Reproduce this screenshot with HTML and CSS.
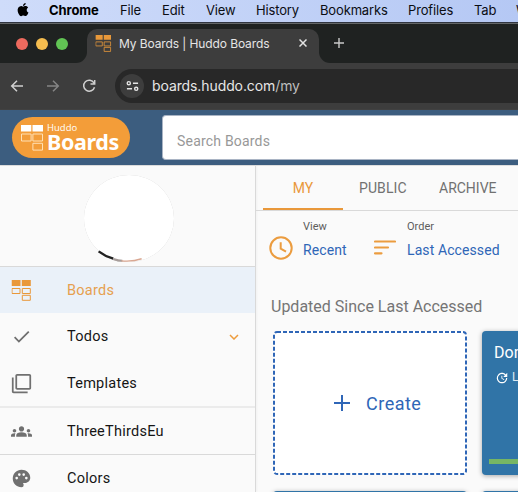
FILE: index.html
```html
<!DOCTYPE html>
<html lang="en">
<head>
<meta charset="utf-8">
<title>My Boards | Huddo Boards</title>
<link rel="stylesheet" href="styles.css">
</head>
<body>
<svg class="defs" width="0" height="0" aria-hidden="true">
  <symbol id="logo" viewBox="0 0 20 21"><path fill="currentColor" d="M0 0h9v6H0zM10.300 0h9v6h-9z"/><path fill="none" stroke="currentColor" d="M.5 8.500h8v5h-8zM10.800 8.500h8v5h-8zM10.800 15.300h8v5h-8z"/></symbol>
</svg>
<nav class="menubar">
  <svg class="apple" viewBox="0 0 24 24"><path d="M18.700 12.700c0-2.700 2.200-4 2.300-4.100-1.300-1.800-3.200-2.100-3.900-2.100-1.700-.2-3.200 1-4.100 1s-2.100-1-3.500-.9c-1.800 0-3.500 1-4.400 2.600-1.900 3.300-.5 8.100 1.300 10.700.9 1.300 2 2.800 3.400 2.700s1.900-.9 3.500-.9 2.100.9 3.500.8c1.500 0 2.400-1.300 3.300-2.600 1-1.500 1.500-2.900 1.500-3-.1 0-2.900-1.100-2.900-4.200zM16 4.900c.7-.9 1.200-2.200 1.100-3.500-1.100.1-2.400.7-3.200 1.600-.7.800-1.300 2.100-1.100 3.300 1.200.1 2.500-.6 3.200-1.400z"/></svg>
  <b>Chrome</b><span>File</span><span>Edit</span><span>View</span><span>History</span><span>Bookmarks</span><span>Profiles</span><span>Tab</span><span>Window</span>
</nav>
<div class="tabstrip">
  <div class="lights"><i class="red"></i><i class="yellow"></i><i class="green"></i></div>
  <div class="tab">
    <svg class="favicon" viewBox="0 0 20 21"><use href="#logo"/></svg>
    <span>My Boards | Huddo Boards</span>
    <svg class="close" viewBox="0 0 8 8"><path d="M.5.5l7 7m0-7l-7 7"/></svg>
  </div>
  <div class="newtab"><svg viewBox="0 0 10 10"><path d="M5 0v10M0 5h10"/></svg></div>
</div>
<div class="toolbar">
  <svg class="nav back" viewBox="0 0 14 14"><path d="M13 7H2M7 1.700L1.700 7 7 12.300"/></svg>
  <svg class="nav forward" viewBox="0 0 14 14"><path d="M1 7h11M7 1.700L12.300 7 7 12.300"/></svg>
  <svg class="nav reload" viewBox="0 0 14 14"><path d="M12 4A5.500 5.500 0 1 0 12.500 8.200M12.700 1v4H8.500"/></svg>
  <div class="address">
    <div class="site"><svg viewBox="0 0 14 12"><path d="M7.500 3H13M1 9h5.500"/><circle cx="3" cy="3" r="1.700"/><circle cx="11" cy="9" r="1.700"/></svg></div>
    <span>boards.huddo.com<em>/my</em></span>
  </div>
</div>
<header class="header">
  <div class="brand">
    <svg viewBox="0 0 22 26"><path fill="#fff" d="M0 0h10.300v6.500H0zM11.500 0H22v6.500H11.500z"/><path fill="none" stroke="#ffe0b5" d="M.5 9h9.600v7H.5zM11.900 9h9.600v7h-9.600zM11.900 18.300h9.600v6.800h-9.600z"/></svg>
    <div class="wordmark"><small>Huddo</small><strong>Boards</strong></div>
  </div>
  <div class="search">Search Boards</div>
</header>
<div class="app">
  <aside class="sidebar">
    <div class="profile"><svg viewBox="0 0 90 88"><ellipse cx="45.500" cy="43" rx="44.500" ry="43" fill="#fff"/><path d="M15.500 75.500Q22 80.500 30 82.800" stroke="#222" stroke-width="2.300" fill="none"/><path d="M30 83Q35 84.800 39 84.800" stroke="#a79d9a" stroke-width="2" fill="none"/><path d="M38 84.900Q49 86 58 82.800" stroke="#d9a792" stroke-width="1.400" fill="none"/></svg></div>
    <div class="item active"><svg class="boards" viewBox="0 0 20 21"><use href="#logo"/></svg><span>Boards</span></div>
    <div class="item todos"><svg viewBox="0 0 24 24"><path d="M9 16.170L4.830 12l-1.420 1.410L9 19 21 7l-1.410-1.410z"/></svg><span>Todos</span><svg class="chevron" viewBox="0 0 10 6"><path d="M1 1l4 4 4-4"/></svg></div>
    <div class="item templates"><svg viewBox="0 0 24 24"><path d="M3 5H1v16c0 1.100.9 2 2 2h16v-2H3V5zm18-4H7c-1.100 0-2 .9-2 2v14c0 1.100.9 2 2 2h14c1.100 0 2-.9 2-2V3c0-1.100-.9-2-2-2zm0 16H7V3h14v14z"/></svg><span>Templates</span></div>
    <div class="item team"><svg viewBox="0 0 24 24"><path d="M12 12.750c1.630 0 3.070.39 4.240.9 1.080.48 1.760 1.560 1.760 2.730V18H6v-1.610c0-1.180.68-2.260 1.760-2.730 1.170-.52 2.610-.91 4.240-.91zM4 13c1.100 0 2-.9 2-2s-.9-2-2-2-2 .9-2 2 .9 2 2 2zm1.130 1.100C4.760 14.040 4.390 14 4 14c-.99 0-1.930.21-2.780.58C.48 14.900 0 15.620 0 16.430V18h4.500v-1.610c0-.83.23-1.610.63-2.290zM20 13c1.100 0 2-.9 2-2s-.9-2-2-2-2 .9-2 2 .9 2 2 2zm4 3.430c0-.81-.48-1.530-1.220-1.850A6.950 6.950 0 0 0 20 14c-.39 0-.76.040-1.130.1.400.68.630 1.460.63 2.290V18H24v-1.570zM12 6c1.660 0 3 1.340 3 3s-1.340 3-3 3-3-1.340-3-3 1.340-3 3-3z"/></svg><span>ThreeThirdsEu</span></div>
    <div class="item colors"><svg viewBox="0 0 24 24"><path d="M12 2C6.490 2 2 6.490 2 12s4.490 10 10 10a2.500 2.500 0 0 0 2.500-2.500c0-.61-.23-1.200-.64-1.670a.53.53 0 0 1-.13-.33c0-.28.22-.5.5-.5H16c3.310 0 6-2.690 6-6 0-4.960-4.490-9-10-9zm-5.500 11a1.500 1.500 0 1 1 0-3 1.500 1.500 0 0 1 0 3zm3-4a1.500 1.500 0 1 1 0-3 1.500 1.500 0 0 1 0 3zm5 0a1.500 1.500 0 1 1 0-3 1.500 1.500 0 0 1 0 3zm3 4a1.500 1.500 0 1 1 0-3 1.500 1.500 0 0 1 0 3z"/></svg><span>Colors</span></div>
  </aside>
  <main class="main">
    <div class="tabs"><span class="my">MY</span><span class="public">PUBLIC</span><span class="archive">ARCHIVE</span></div>
    <div class="filters">
      <svg class="clock" viewBox="0 0 24 24"><circle cx="12" cy="12" r="10.700"/><path d="M11.700 6.200v6.500l5.300 3"/></svg>
      <div class="filter recent"><small>View</small><span>Recent</span></div>
      <svg class="sort" viewBox="0 0 22 15"><path d="M1 1.500h20M1 7.500h13M1 13.300h6.500"/></svg>
      <div class="filter order"><small>Order</small><span>Last Accessed</span></div>
    </div>
    <h2>Updated Since Last Accessed</h2>
    <div class="cards">
      <div class="create">
        <svg class="outline" viewBox="0 0 194 144"><rect x="1" y="1" width="192" height="142" rx="3"/></svg>
        <svg class="plus" viewBox="0 0 16 16"><path d="M8 0v16M0 8h16"/></svg><span>Create</span>
      </div>
      <div class="card">
        <h3>Done</h3>
        <div class="updated"><svg viewBox="0 0 24 24"><path d="M21 10.120h-6.780l2.740-2.820c-2.730-2.700-7.150-2.800-9.880-.1-2.730 2.710-2.730 7.080 0 9.790s7.150 2.710 9.880 0C18.320 15.650 19 14.080 19 12.100h2c0 1.980-.88 4.550-2.640 6.290-3.510 3.480-9.210 3.480-12.720 0-3.500-3.470-3.530-9.110-.02-12.580s9.140-3.470 12.650 0L21 3v7.120zM12.500 8v4.250l3.500 2.080-.72 1.210L11 13V8h1.500z"/></svg><span>Last</span></div>
        <div class="progress"></div>
      </div>
      <div class="card next"></div>
      <div class="card next"></div>
    </div>
  </main>
</div>
</body>
</html>
```
FILE: styles.css
```css
* { box-sizing: border-box; }
html { overflow: hidden; }
body { margin: 0; width: 518px; height: 492px; overflow: hidden; display: flex; flex-direction: column; background: #fafafa; font-family: Roboto, sans-serif; }
.defs { position: absolute; }
svg { display: block; flex: none; }

.menubar { height: 24px; flex: none; display: grid; grid-template-columns: 34px 71px 42px 44px 50px 64px 88px 66px 42px 2px; overflow: hidden; padding-left: 15px; line-height: 20px; font-family: Inter, sans-serif; font-size: 13px; letter-spacing: -.15px; color: #0b0d13; background: linear-gradient(90deg, #cfdcfa, #b5c8f4); border-bottom: 1px solid #636667; box-shadow: inset 0 -1px #303540; white-space: nowrap; }
.menubar b { color: #000; letter-spacing: -.1px; }
.apple { width: 15px; height: 17px; margin-top: 1px; }

.tabstrip { height: 39px; flex: none; display: flex; overflow: hidden; background: linear-gradient(90deg, #1f2221 0 70px, #3d3d3d 70px 335px, #1f2221 335px); }
.lights { position: relative; z-index: 1; width: 87px; display: flex; gap: 8px; padding: 14px 0 0 16px; border-radius: 0 0 11px 0; background: #1f2221; }
.lights i { width: 12px; height: 12px; border-radius: 50%; }
.red { background: #ed6a5e; }
.yellow { background: #f5bd4f; }
.green { background: #61c454; }
.tab { width: 232px; display: flex; align-items: center; height: 34px; margin-top: 5px; padding: 0 12px 6px 8px; background: #3d3d3d; border-radius: 10px 10px 0 0; color: #e5e5e5; font: 12px Inter, sans-serif; letter-spacing: -.1px; box-shadow: 0 -16px 0 11px #1f2221; clip-path: inset(-5px 0 0 0); white-space: nowrap; }
.favicon { width: 17px; height: 17px; margin-right: 7px; color: #e8983a; }
.close { width: 8px; height: 8px; margin-left: auto; stroke: #e3e3e3; stroke-width: 1.500; fill: none; }
.newtab { flex: 1; padding: 14px 0 0 15px; background: #1f2221; border-radius: 0 0 0 11px; }
.newtab svg { width: 10px; height: 10px; stroke: #c9c9c9; stroke-width: 1.400; }

.toolbar { height: 47px; flex: none; display: flex; align-items: center; background: #3d3d3d; padding: 0 0 1px 10px; border-bottom: 1px solid #414141; }
.nav { width: 14px; height: 14px; fill: none; stroke: #d0d0d0; stroke-width: 1.500; }
.forward { margin-left: 22px; stroke: #858585; }
.reload { margin-left: 22px; }
.address { height: 34px; flex: 1; display: flex; align-items: center; margin-left: 19px; padding-left: 5px; border-radius: 17px 0 0 17px; background: #282828; color: #e6e6e6; font: 14px Inter, sans-serif; letter-spacing: -.1px; }
.address em { font-style: normal; color: #bdbdbd; }
.site { width: 24px; height: 24px; display: grid; place-items: center; margin-right: 8px; border-radius: 50%; background: #3d3d3d; }
.site svg { width: 13px; height: 12px; stroke: #e5e5e5; stroke-width: 1.500; fill: none; }

.header { height: 55px; flex: none; display: flex; background: #3c5d7f; padding: 5px 0 0 12px; }
.brand { width: 118px; height: 41px; margin-top: 2px; display: flex; padding: 8px 0 0 9px; border-radius: 21px; background: #f39d39; color: #fff; }
.brand svg { width: 22px; height: 26px; }
.wordmark { margin: -1px 0 0 4px; display: flex; flex-direction: column; font-family: "Open Sans", sans-serif; }
.wordmark small { font-size: 9.500px; line-height: 8px; letter-spacing: 0; }
.wordmark strong { font-family: "Noto Sans", sans-serif; font-size: 21.500px; line-height: 19px; letter-spacing: -.4px; }
.search { flex: 1; height: 45px; margin-left: 32px; padding-left: 14px; border: 1px solid #a9b4c4; border-right: 0; border-radius: 4px 0 0 4px; background: #fff; color: #989898; font-size: 14px; line-height: 50px; letter-spacing: .2px; }

.app { flex: 1; min-height: 0; display: flex; border-top: 1px solid #dedede; }
.sidebar { width: 256px; flex: none; overflow: hidden; border-right: 1px solid #d9d9d9; box-shadow: 1px 0 2px #0000000a; }
.profile { height: 101px; padding: 9px 0 0 83px; border-bottom: 1px solid #d9d9d9; }
.profile svg { width: 91px; height: 89px; filter: drop-shadow(0 .7px .7px #0003); }
.item { height: 47px; display: flex; align-items: center; padding-left: 11px; font-size: 14.500px; letter-spacing: .25px; color: #151515; }
.item svg { width: 21px; height: 21px; fill: #707070; }
.item span { margin-left: 35px; }
.item .boards { width: 21px; height: 21px; color: #e9983a; fill: none; }
.item.active { height: 46px; background: #eaf1f9; color: #e6a04f; }
.templates { height: 48px; border-bottom: 2px solid #ebebeb; }
.team { border-bottom: 1px solid #d9d9d9; }
.item .chevron { width: 10px; height: 6px; margin: 0 16px 0 auto; fill: none; stroke: #ed9c3d; stroke-width: 1.500; }

.main { flex: 1; min-width: 0; overflow: hidden; }
.tabs { height: 45px; display: flex; padding-left: 7px; border-bottom: 1px solid #d9d9d9; font-size: 14px; line-height: 44px; color: #717171; }
.my { width: 80px; text-align: center; color: #e9983a; border-bottom: 2px solid #e9983a; }
.public { margin-left: 16px; width: 80px; letter-spacing: .1px; }
.filters { height: 54px; display: flex; padding-left: 13px; }
.clock { width: 24px; height: 24px; margin-top: 25px; fill: none; stroke: #eb9c3f; stroke-width: 2; }
.filter { display: flex; flex-direction: column; margin-left: 10px; padding-top: 9px; color: #2f66b7; font-size: 14px; line-height: 20px; letter-spacing: .1px; }
.filter small { font-size: 11px; line-height: 13px; margin-bottom: 7px; color: #5d5d5d; letter-spacing: 0; }
.recent { width: 71px; }
.sort { width: 22px; height: 15px; margin-top: 29px; stroke: #eb9c3f; stroke-width: 2.200; stroke-linecap: round; }
.order { margin-left: 11px; }
h2 { margin: 32px 0 0 15px; font-size: 16px; line-height: 20px; font-weight: 400; letter-spacing: 0; color: #757575; white-space: nowrap; }
.cards { display: grid; grid-template-columns: 194px 194px; gap: 16px 15px; padding: 14px 0 0 17px; }
.create, .card { height: 144px; border-radius: 4px; }
.create { position: relative; display: flex; align-items: center; padding-left: 61px; background: #fff; color: #2f66b7; font-size: 18px; letter-spacing: .5px; }
.outline { position: absolute; inset: 0; width: 194px; height: 144px; fill: none; stroke: #2f66b7; stroke-width: 2; stroke-dasharray: 4 2; }
.plus { width: 16px; height: 16px; margin-right: 16px; stroke: #2f66b7; stroke-width: 2; }
.card { padding: 12px 0 0 12px; background: #3074a7; color: #fff; box-shadow: 0 1px 5px #0005; overflow: hidden; }
h3 { margin: 0; font-size: 16px; line-height: 20px; font-weight: 400; }
.updated { display: flex; align-items: center; gap: 3px; margin-top: 7px; font-size: 12px; line-height: 15px; color: #dce8f1; }
.updated svg { width: 14px; height: 14px; margin-left: 1px; fill: #fff; }
.progress { height: 5px; margin: 74px 6px 0 -5px; background: #76b664; }
```
